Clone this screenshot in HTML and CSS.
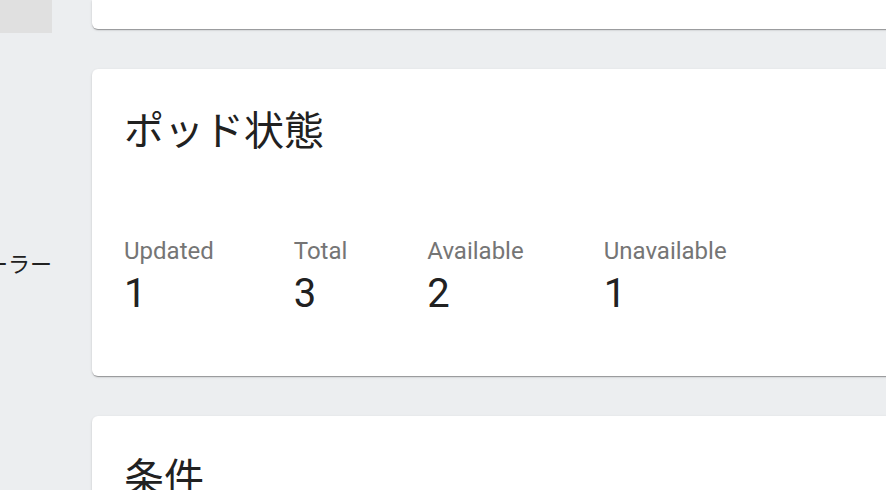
FILE: index.html
```html
<!DOCTYPE html>
<html lang="ja">
<head>
<meta charset="utf-8">
<title>ポッド状態</title>
<link rel="stylesheet" href="styles.css">
</head>
<body>
<aside class="sidebar">
  <div class="sidebar-block"></div>
  <nav class="sidebar-nav">
    <div class="nav-item"><span class="nav-text">レプリケーションコントローラー</span></div>
  </nav>
</aside>
<main class="content">
  <section class="card card-clipped"></section>
  <section class="card card-status">
    <h2 class="card-title">ポッド状態</h2>
    <div class="props">
      <div class="prop"><div class="prop-label">Updated</div><div class="prop-value">1</div></div>
      <div class="prop"><div class="prop-label">Total</div><div class="prop-value">3</div></div>
      <div class="prop"><div class="prop-label">Available</div><div class="prop-value">2</div></div>
      <div class="prop"><div class="prop-label">Unavailable</div><div class="prop-value">1</div></div>
    </div>
  </section>
  <section class="card card-conditions">
    <h2 class="card-title">条件</h2>
  </section>
</main>
</body>
</html>
```
FILE: styles.css
```css
html, body {
  margin: 0;
  padding: 0;
  height: 100%;
}
body {
  background: #eceef0;
  display: flex;
  overflow: hidden;
  font-family: Roboto, "Noto Sans CJK JP", sans-serif;
  color: #212121;
}
.sidebar {
  flex: 0 0 52px;
  width: 52px;
  overflow: hidden;
}
.sidebar-block {
  height: 33px;
  background: #e0e0e0;
}
.sidebar-nav {
  padding-top: 210px;
}
.nav-item {
  height: 38px;
  display: flex;
  justify-content: flex-end;
  align-items: center;
  white-space: nowrap;
}
.nav-text {
  font-family: "Noto Sans CJK JP", sans-serif;
  font-size: 22px;
  color: #212121;
  flex: 0 0 auto;
}
.content {
  flex: 0 0 830px;
  padding-left: 40px;
  display: flex;
  flex-direction: column;
  gap: 40px;
}
.card {
  flex-shrink: 0;
  background: #fff;
  border-radius: 6px;
  box-shadow: 0 2px 1px -1px rgba(0,0,0,.2), 0 1px 1px 0 rgba(0,0,0,.14), 0 1px 3px 0 rgba(0,0,0,.12);
}
.card-clipped {
  height: 29px;
  border-radius: 0 0 6px 6px;
}
.card-status {
  height: 307px;
  box-sizing: border-box;
  padding: 37px 32px 0;
}
.card-conditions {
  height: 120px;
  box-sizing: border-box;
  padding: 37px 32px 0;
}
.card-title {
  margin: 0;
  font-family: "Noto Sans CJK JP", sans-serif;
  font-weight: 400;
  font-size: 40px;
  line-height: 44px;
  color: #212121;
}
.props {
  display: flex;
  gap: 80px;
  margin-top: 87px;
}
.prop-label {
  font-size: 24px;
  line-height: 28px;
  color: #757575;
}
.prop-value {
  margin-top: 6px;
  font-size: 40px;
  line-height: 46px;
  color: #212121;
}
```
